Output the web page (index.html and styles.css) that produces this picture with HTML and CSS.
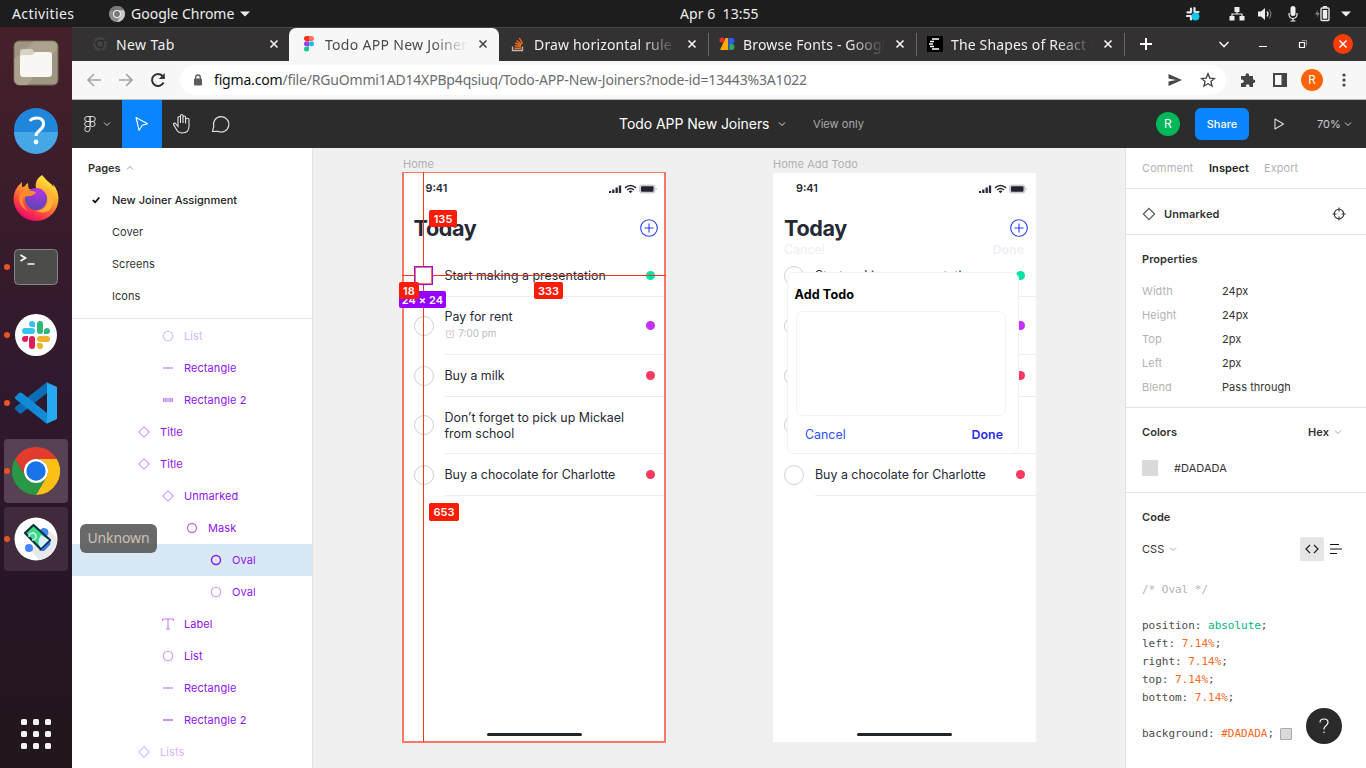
FILE: index.html
```html
<!DOCTYPE html>
<html lang="en">
<head>
<meta charset="utf-8">
<title>Todo APP New Joiners</title>
<link rel="stylesheet" href="styles.css">
</head>
<body>
<svg class="defs" aria-hidden="true">
  <symbol id="x" viewBox="0 0 10 10"><path d="M1.5 1.5l7 7M8.500 1.500l-7 7" fill="none" stroke="currentColor" stroke-width="1.700"/></symbol>
  <symbol id="chev" viewBox="0 0 8 8"><path d="M1 2.500l3 3 3-3" fill="none" stroke="currentColor"/></symbol>
  <symbol id="oval" viewBox="0 0 12 12"><circle cx="6" cy="6" r="4.700" fill="none" stroke="currentColor" stroke-width="1.100"/></symbol>
  <symbol id="ovalb" viewBox="0 0 12 12"><circle cx="6" cy="6" r="4.500" fill="none" stroke="currentColor" stroke-width="1.400"/></symbol>
  <symbol id="diamond" viewBox="0 0 12 12"><path d="M6 .7L11.300 6 6 11.300.7 6z" fill="none" stroke="currentColor" stroke-width="1.100"/></symbol>
  <symbol id="line" viewBox="0 0 12 12"><path d="M1 6h10" stroke="currentColor" stroke-width="1.600"/></symbol>
  <symbol id="bar" viewBox="0 0 12 12"><path d="M1 6h10" stroke="currentColor" stroke-width="4" opacity=".55"/><path d="M1.500 4v4M10.500 4v4M4 4v4M8 4v4" stroke="currentColor" stroke-width="1" opacity=".6"/></symbol>
  <symbol id="tee" viewBox="0 0 12 12"><path d="M.6 3V1h10.800v2M6 1v10M4 11h4" fill="none" stroke="currentColor" stroke-width="1"/></symbol>
  <symbol id="status" viewBox="0 0 48 10">
    <path d="M1 7v2M4.300 5.500V9M7.700 3.500V9M11 1.500V9" stroke="#262a35" stroke-width="2.300"/>
    <path d="M16 3.800q5.500-4.600 11 0M18 6q3.500-2.800 7 0" fill="none" stroke="#262a35" stroke-width="1.500"/><path d="M19.500 7.300q2-1.400 4 0l-2 2z" fill="#262a35"/>
    <rect x="30.500" y="1" width="15.500" height="8" rx="2.200" fill="#d5d5d7" stroke="#b9babd" stroke-width=".7"/><rect x="32" y="2.300" width="12.500" height="5.400" rx="1" fill="#20242e"/><path d="M47.300 4v2" stroke="#c4c4c7"/>
  </symbol>
  <symbol id="plus" viewBox="0 0 18 18"><circle cx="9" cy="9" r="8.300" fill="none" stroke="currentColor" stroke-width="1.100"/><path d="M9 4.500v9M4.500 9h9" stroke="currentColor" stroke-width="1.100"/></symbol>
</svg>

<header class="topbar">
  <span class="activities">Activities</span>
  <svg class="tb-chrome" viewBox="0 0 16 16"><circle cx="8" cy="8" r="8" fill="#8d8d8d"/><path d="M8 8L1 4A8 8 0 0 1 15 4z" fill="#777"/><path d="M15 4.200A8 8 0 0 1 8 16l3.500-6L10 4.200z" fill="#c9c9c9"/><circle cx="8" cy="8" r="4" fill="#eee"/><circle cx="8" cy="8" r="2.900" fill="#777"/></svg>
  <span class="appname">Google Chrome</span>
  <svg class="tri" viewBox="0 0 10 6"><path d="M0 .500h10L5 5.500z" fill="#eee"/></svg>
  <span class="clock">Apr 6&nbsp; 13:55</span>
  <div class="tray">
    <svg width="16" height="16" viewBox="0 0 16 16"><g stroke="#e8e8e8" stroke-width="2.200" stroke-linecap="round"><path d="M6 2.500V6M9.500 2v4M2.500 6.300H6M2 10h4M10 6h3.500M6 10v3.500"/></g><circle cx="10.500" cy="10.500" r="3.900" fill="#0fc8ee"/></svg>
    <svg width="16" height="16" viewBox="0 0 16 16" fill="#eee"><rect x="5.500" y="1" width="5" height="5"/><rect x=".5" y="10" width="5" height="4.500"/><rect x="10.500" y="10" width="5" height="4.500"/><path d="M3 11V8h10v3M8 5v3" stroke="#eee" stroke-width="1.200" fill="none"/></svg>
    <svg width="16" height="16" viewBox="0 0 16 16"><path d="M1 5.500h3L8 2v12L4 10.500H1z" fill="#eee"/><path d="M10 5.500q2 2.500 0 5" fill="none" stroke="#eee" stroke-width="1.300"/><path d="M12.500 3.500q3 4.500 0 9" fill="none" stroke="#888"/></svg>
    <svg width="16" height="16" viewBox="0 0 16 16"><rect x="5.500" y="0" width="5" height="10" rx="2.500" fill="#eee"/><path d="M4 7v1.500a4 4 0 0 0 8 0V7M8 12.500V15M5.500 15h5" fill="none" stroke="#eee" stroke-width="1.200"/></svg>
    <svg width="18" height="16" viewBox="0 0 18 16"><path d="M5 4L2 8.500h2.500L4 12l2.500-5H4.500z" fill="#888"/><rect x="8" y="2" width="8" height="12.500" rx="1" fill="none" stroke="#eee" stroke-width="1.300"/><rect x="9.800" y="4" width="4.400" height="8.700" fill="#eee"/><path d="M10 .8h4" stroke="#eee" stroke-width="1.500"/></svg>
    <svg class="tri" viewBox="0 0 10 6"><path d="M0 .500h10L5 5.500z" fill="#eee"/></svg>
  </div>
</header>

<div class="desktop">
<nav class="dock">
  <div class="app"><svg viewBox="0 0 48 48"><rect x="2" y="2" width="44" height="44" rx="5" fill="#9f9681" stroke="#6d6658"/><path d="M2.500 20L22 2.500h20l3 3V10L15 46H6l-3.500-4z" fill="#aca38e"/><path d="M8 13q0-3 3-3h8q2 0 3 3h14q4 0 4 4v17q0 4-4 4H12q-4 0-4-4z" fill="#d9d2c2"/><path d="M8 18q0-2 3-2h9l4-3h13q3 0 3 3v18q0 4-4 4H12q-4 0-4-4z" fill="#f8f7f5"/></svg></div>
  <div class="app"><svg viewBox="0 1 48 48"><circle cx="24" cy="24" r="22" fill="#1f86dc"/><path d="M2 26h44a22 22 0 0 1-44 0z" fill="#45a7e6"/><path d="M18 15q2-3 7-3 6.500 0 6.500 6 0 3-3.500 6-4 3-4 6" fill="none" stroke="#fff" stroke-width="3"/><circle cx="24" cy="36" r="2.400" fill="#fff"/></svg></div>
  <div class="app"><svg viewBox="0 1 48 48">
    <defs><linearGradient id="fx" x1=".8" y1=".1" x2=".3" y2="1"><stop offset="0" stop-color="#ffe43c"/><stop offset=".4" stop-color="#ff9a2b"/><stop offset=".75" stop-color="#ff3a47"/><stop offset="1" stop-color="#e60073"/></linearGradient><radialGradient id="fp" cx=".6" cy=".1" r=".9"><stop offset="0" stop-color="#b833e1"/><stop offset="1" stop-color="#5947b8"/></radialGradient></defs>
    <path d="M30 1q5 6 9 9 2 1 2 3 1-1 0-3 5 6 5.500 14A22.500 22.500 0 0 1 24 47 22.500 22.500 0 0 1 1.500 24Q2 15 10 8v5q2 0 3-1 2-3 3-3 0 4 1 6h7q-2-9 6-14z" fill="url(#fx)"/>
    <circle cx="24" cy="25" r="11" fill="url(#fp)"/><path d="M8 20q7-6 16-2-1 3-6 4-5 0-7 2-1 8 5 13Q5 32 8 20z" fill="#ff8a2a"/><path d="M28 14q7 2 8 11 0 10-12 12 14 5 17-8 1-9-6-14z" fill="#ffb238"/>
  </svg></div>
  <div class="app"><i class="run"></i><svg viewBox="0 -1 48 48"><rect x="2.500" y="5.500" width="43" height="35" rx="4" fill="#4c4d4b" stroke="#858585"/><path d="M8.500 11l5 3-5 3" fill="none" stroke="#fff" stroke-width="1.700"/><path d="M15.500 20h7" stroke="#fff" stroke-width="1.500"/></svg></div>
  <div class="app"><i class="run"></i><svg viewBox="0 0 48 48"><circle cx="24" cy="24" r="21" fill="#fff"/>
    <g fill="#36c5f0"><rect x="10" y="17" width="13" height="6" rx="3"/><path d="M23 16h-3a3 3 0 1 1 3-3z"/></g><g fill="#2eb67d"><rect x="25" y="10" width="6" height="13" rx="3"/><path d="M32 23v-3a3 3 0 1 1 3 3z"/></g><g fill="#ecb22e"><rect x="25" y="25" width="13" height="6" rx="3"/><path d="M25 32h3a3 3 0 1 1-3 3z"/></g><g fill="#e01e5a"><rect x="17" y="25" width="6" height="13" rx="3"/><path d="M16 25v3a3 3 0 1 1-3-3z"/></g></svg></div>
  <div class="app"><i class="run"></i><svg viewBox="0 0 48 48"><path d="M3 30l4 4q1 1 3 0l25-20V3L3.500 28q-1 1-.5 2z" fill="#0d6db4"/><path d="M3 18l4-4q1-1 3 0l25 20v11L3.500 20q-1-1-.5-2z" fill="#128bd7"/><path d="M34 3l11 5v32l-11 5q1 0 1-2V5q0-2-1-2z" fill="#27a9f2"/></svg></div>
  <div class="app open"><i class="run"></i><svg viewBox="0 0 48 48"><path d="M3.200 12a24 24 0 0 1 41.600 0H24a12 12 0 0 0-10.400 18z" fill="#e33b2e"/><path d="M44.800 12A24 24 0 0 1 24 48l10.400-18A12 12 0 0 0 24 12z" fill="#fcc014"/><path d="M24 48A24 24 0 0 1 3.200 12l10.400 18A12 12 0 0 0 34.400 30z" fill="#289847"/><circle cx="24" cy="24" r="12" fill="#fff"/><circle cx="24" cy="24" r="9.700" fill="#1a73e8"/></svg></div>
  <div class="app dim"><i class="run"></i><svg viewBox="0 0 48 48"><circle cx="24" cy="24" r="21.500" fill="#fff"/><path d="M18 35l20-19 7 7a21.500 21.500 0 0 1-18 22z" fill="#e9e9e9"/><circle cx="32" cy="17.500" r="4.500" fill="#4285f4"/><circle cx="17" cy="33" r="4" fill="#4285f4"/><path d="M27 36l12-12-1 6-6 6z" fill="#3778e8"/><path d="M21.500 10L38 25 28.500 34 13 18z" fill="#3ddc84" stroke="#073042" stroke-width="2.200" stroke-linejoin="round"/><path d="M29 20l8 5-8 8q-5-5 0-13z" fill="#d7effe"/><path d="M17 22a3.500 3.500 0 1 1 3 3" fill="none" stroke="#d7effe" stroke-width="1.500"/></svg></div>
  <div class="grid9"><i></i><i></i><i></i><i></i><i></i><i></i><i></i><i></i><i></i></div>
  <div class="tooltip">Unknown</div>
</nav>

<div class="browser">
  <div class="tabs">
    <div class="tab first"><svg class="fav" viewBox="0 0 16 16"><circle cx="8" cy="8" r="7" fill="#414347"/><circle cx="8" cy="8" r="3.600" fill="none" stroke="#2b292a" stroke-width="1.200"/><path d="M8 4.400h6.500M4.900 9.800L1.800 4.200M11.100 9.800L8 15" stroke="#2b292a"/></svg><span class="name">New Tab</span><svg class="x"><use href="#x"/></svg></div>
    <div class="tab active"><svg class="fav" viewBox="0 0 16 16"><path d="M5.500 0H8v5H5.500a2.500 2.500 0 0 1 0-5z" fill="#f9300c"/><path d="M8 0h2.500a2.500 2.500 0 0 1 0 5H8z" fill="#ff7262"/><path d="M5.500 5.300H8v5H5.500a2.500 2.500 0 0 1 0-5z" fill="#a23bff"/><circle cx="10.500" cy="7.800" r="2.500" fill="#1abcfe"/><path d="M5.500 10.600H8v2.500a2.500 2.500 0 1 1-2.500-2.500z" fill="#0acf83"/></svg><span class="name fade">Todo APP New Joiners</span><svg class="x"><use href="#x"/></svg></div>
    <div class="tab"><svg class="fav" viewBox="0 0 16 16"><path d="M2.500 10.500v4h10v-4" fill="none" stroke="#bcbbbb" stroke-width="1.300"/><path d="M4.500 12.300h6.500M4.600 9.600l6.400.9M5.200 7l6 2.200M6.700 4.500l5 4M9.300 2l3.300 5.500" stroke="#f46f14" stroke-width="1.400"/></svg><span class="name fade">Draw horizontal rule in</span><svg class="x"><use href="#x"/></svg></div>
    <div class="tab sep"><svg class="fav" viewBox="0 0 16 16"><path d="M9 2h3.500a3 3 0 0 1 0 6H9z" fill="#2a5ee8"/><path d="M9 8h3.500a3 3 0 0 1 0 6H9z" fill="#34a853"/><path d="M8 2h2.500v12H8z" fill="#2d4fd0"/><path d="M6.500 2H9v12H1z" fill="#fbaa04"/><circle cx="3" cy="4" r="2.600" fill="#ea2f25"/></svg><span class="name fade">Browse Fonts - Google</span><svg class="x"><use href="#x"/></svg></div>
    <div class="tab sep"><svg class="fav" viewBox="0 0 16 16"><rect width="16" height="16" fill="#000"/><path d="M5 3h7M3 5.500h4M2 8h4M3 10.500h4M5 13h7" stroke="#fff" stroke-width="1.400"/></svg><span class="name fade">The Shapes of React Na</span><svg class="x"><use href="#x"/></svg></div>
    <div class="winctl">
      <svg width="14" height="14" viewBox="0 0 14 14"><path d="M7 1v12M1 7h12" stroke="#fff" stroke-width="2"/></svg>
      <svg width="12" height="12" viewBox="0 0 12 12"><path d="M1.500 4L6 8.500 10.500 4" fill="none" stroke="#eee" stroke-width="1.600"/></svg>
      <svg width="10" height="10" viewBox="0 0 10 10"><path d="M1 7.500h8" stroke="#fff"/></svg>
      <svg width="10" height="10" viewBox="0 0 10 10"><path d="M1.500 3.500h5v5h-5z" fill="none" stroke="#fff" stroke-width="1.200"/><path d="M3.500 1.500h5v5" fill="none" stroke="#aaa" stroke-width=".8"/></svg>
      <svg width="20" height="20" viewBox="0 0 20 20"><circle cx="10" cy="10" r="10" fill="#f83c04"/><path d="M6.500 6.500l7 7M13.500 6.500l-7 7" stroke="#fff" stroke-width="1.500"/></svg>
    </div>
  </div>

  <div class="toolbar">
    <svg width="16" height="16" viewBox="0 0 16 16"><path d="M15 8H2.500M8 2L2 8l6 6" fill="none" stroke="#a5a5a5" stroke-width="1.700"/></svg>
    <svg width="16" height="16" viewBox="0 0 16 16"><path d="M1 8h12.500M8 2l6 6-6 6" fill="none" stroke="#a5a5a5" stroke-width="1.700"/></svg>
    <svg width="16" height="16" viewBox="0 0 16 16"><path d="M13.500 10.500A6 6 0 1 1 12.500 4" fill="none" stroke="#333" stroke-width="2"/><path d="M14.800 1v6H8.800z" fill="#333"/></svg>
    <div class="omnibox">
      <svg width="10" height="12" viewBox="0 0 10 12"><rect x="1" y="4.500" width="8" height="7" rx="1" fill="#5a5c63"/><path d="M2.700 5V3.300a2.300 2.300 0 0 1 4.600 0V5" fill="none" stroke="#5a5c63" stroke-width="1.300"/></svg>
      <span class="url"><b>figma.com</b>/file/RGuOmmi1AD14XPBp4qsiuq/Todo-APP-New-Joiners?node-id=13443%3A1022</span>
      <svg class="send" width="16" height="16" viewBox="0 0 16 16"><path d="M1.500 2L15 8 1.500 14V9.500L9 8 1.500 6.500z" fill="#484848"/></svg>
      <svg width="16" height="16" viewBox="0 0 16 16"><path d="M8 1.800l1.800 4.300 4.700.4-3.500 3.100 1 4.500L8 11.700l-4 2.400 1-4.500L1.500 6.500l4.700-.4z" fill="none" stroke="#484848" stroke-width="1.400"/></svg>
    </div>
    <svg width="16" height="16" viewBox="0 0 16 16"><path d="M1 4h4.500V3a1.800 1.800 0 0 1 3.600 0v1H13v3.500h.500a1.800 1.800 0 0 1 0 3.600H13V15H9.500v-1a1.800 1.800 0 0 0-3.600 0v1H1v-4h1a1.800 1.800 0 0 0 0-3.600H1z" fill="#444"/></svg>
    <svg width="16" height="16" viewBox="0 0 16 16"><rect x="2" y="2" width="12" height="12" fill="none" stroke="#444" stroke-width="2"/><path d="M9.500 2H15v12H9.500z" fill="#444"/></svg>
    <span class="profile">R</span>
    <svg width="16" height="16" viewBox="0 0 16 16" fill="#444"><circle cx="8" cy="3" r="1.600"/><circle cx="8" cy="8" r="1.600"/><circle cx="8" cy="13" r="1.600"/></svg>
  </div>

  <div class="figbar">
    <div class="tools">
      <div class="tool menu"><svg width="14" height="18" viewBox="0 0 14 18"><path d="M4.200 1.500H7v5H4.200a2.500 2.500 0 0 1 0-5zM7 1.500h2.800a2.500 2.500 0 0 1 0 5H7zM4.200 6.500H7v5H4.200a2.500 2.500 0 0 1 0-5zM4.200 11.500H7V14a2.600 2.600 0 1 1-2.800-2.500z" fill="none" stroke="#ddd"/><circle cx="9.600" cy="9" r="2.500" fill="none" stroke="#ddd"/></svg><svg width="8" height="8"><use href="#chev"/></svg></div>
      <div class="tool on"><svg width="18" height="18" viewBox="0 0 18 18"><path d="M3 2.500l11.500 6.200-5.200 1.600-3.200 5z" fill="none" stroke="#fff" stroke-width="1.100" stroke-linejoin="round"/></svg></div>
      <div class="tool"><svg width="22" height="22" viewBox="0 0 22 22"><path d="M7 12V4.800c0-1.800 2.500-1.800 2.500 0V10M9.500 5V2.800c0-1.700 2.500-1.700 2.500 0V10M12 4.300c0-1.700 2.600-1.700 2.600 0V10.500M14.600 6.500c0-1.600 3.400-1.600 3.400 0V13c0 4.500-2.500 7-6.800 7-3.200 0-4.700-1.500-5.700-3.500l-2.800-4.600C1.700 10.400 3.700 9.300 5 11l2 2.500V11" fill="none" stroke="#e4e4e4" stroke-width="1.100"/></svg></div>
      <div class="tool"><svg width="20" height="20" viewBox="0 0 20 20"><path d="M1.500 17.500l1.300-5A7.700 7.700 0 1 1 6.800 17.200z" fill="none" stroke="#e4e4e4" stroke-width="1.100" stroke-linejoin="round"/></svg></div>
    </div>
    <div class="doc"><span class="doctitle">Todo APP New Joiners</span><svg width="8" height="8"><use href="#chev"/></svg><span class="viewonly">View only</span></div>
    <div class="acts"><span class="me">R</span><span class="share">Share</span><svg class="play" width="12" height="14" viewBox="0 0 12 14"><path d="M2 2l8.500 5L2 12z" fill="none" stroke="#ddd" stroke-width="1.100" stroke-linejoin="round"/></svg><span class="pct">70%</span><svg width="8" height="8"><use href="#chev"/></svg></div>
  </div>

  <div class="work">
    <aside class="left">
      <div class="pages">
        <div class="phead">Pages <svg class="flip" width="8" height="8"><use href="#chev"/></svg></div>
        <div class="page cur"><svg width="8" height="8" viewBox="0 0 8 8"><path d="M.8 4l2.400 2.300L7.300 1.500" fill="none" stroke="#000" stroke-width="1.700"/></svg>New Joiner Assignment</div>
        <div class="page">Cover</div>
        <div class="page">Screens</div>
        <div class="page">Icons</div>
      </div>
      <div class="layers">
        <div class="layer l2 hid"><svg><use href="#oval"/></svg>List</div>
        <div class="layer l2"><svg><use href="#line"/></svg>Rectangle</div>
        <div class="layer l2 full"><svg><use href="#bar"/></svg>Rectangle 2</div>
        <div class="layer l1"><svg><use href="#diamond"/></svg>Title</div>
        <div class="layer l1"><svg><use href="#diamond"/></svg>Title</div>
        <div class="layer l2"><svg><use href="#diamond"/></svg>Unmarked</div>
        <div class="layer l3 mid"><svg><use href="#ovalb"/></svg>Mask</div>
        <div class="layer l4 sel"><svg><use href="#ovalb"/></svg>Oval</div>
        <div class="layer l4"><svg><use href="#oval"/></svg>Oval</div>
        <div class="layer l2 mid"><svg><use href="#tee"/></svg>Label</div>
        <div class="layer l2"><svg><use href="#oval"/></svg>List</div>
        <div class="layer l2"><svg><use href="#line"/></svg>Rectangle</div>
        <div class="layer l2 mid"><svg><use href="#line"/></svg>Rectangle 2</div>
        <div class="layer l1 hid"><svg><use href="#diamond"/></svg>Lists</div>
      </div>
    </aside>

    <main class="canvas">
      <div class="flabel home">Home</div>
      <section class="frame home">
        <div class="status"><span>9:41</span><svg><use href="#status"/></svg></div>
        <div class="title"><span>Today</span><svg><use href="#plus"/></svg></div>
        <div class="todo"><i class="ring"></i><div class="body"><span>Start making a presentation</span><i class="dot green"></i></div></div>
        <div class="todo t2"><i class="ring"></i><div class="body"><div><span>Pay for rent</span><div class="time"><svg width="10" height="10" viewBox="0 0 10 10"><circle cx="5" cy="5.300" r="3.700" fill="none" stroke="#c3c3c6" stroke-width=".9"/><path d="M5 3v2.500h1.700M.6 2.300L2.300.8M9.400 2.300L7.700.8M2.500 8.500l-1 1M7.500 8.500l1 1" fill="none" stroke="#c3c3c6" stroke-width=".9"/></svg>7:00 pm</div></div><i class="dot purple"></i></div></div>
        <div class="todo"><i class="ring"></i><div class="body"><span>Buy a milk</span><i class="dot red"></i></div></div>
        <div class="todo t4"><i class="ring"></i><div class="body"><span>Don’t forget to pick up Mickael<br>from school</span></div></div>
        <div class="todo"><i class="ring"></i><div class="body"><span>Buy a chocolate for Charlotte</span><i class="dot red"></i></div></div>
        <i class="homebar"></i>
      </section>
      <i class="outline"></i>
      <i class="selbox"></i>
      <i class="guide-h a"></i><i class="guide-h b"></i><i class="guide-v a"></i><i class="guide-v b"></i>
      <span class="size">24 × 24</span>
      <span class="tag g135">135</span><span class="tag g18">18</span><span class="tag g333">333</span><span class="tag g653">653</span>

      <div class="flabel add">Home Add Todo</div>
      <section class="frame add">
        <div class="status"><span>9:41</span><svg><use href="#status"/></svg></div>
        <div class="title"><span>Today</span><svg><use href="#plus"/></svg></div>
        <div class="todo"><i class="ring"></i><div class="body"><span>Start making a presentation</span><i class="dot green"></i></div></div>
        <div class="todo t2"><i class="ring"></i><div class="body"><i class="dot purple"></i></div></div>
        <div class="todo"><i class="ring"></i><div class="body"><i class="dot red"></i></div></div>
        <div class="todo t4"><i class="ring"></i><div class="body"></div></div>
        <div class="todo"><i class="ring"></i><div class="body"><span>Buy a chocolate for Charlotte</span><i class="dot red"></i></div></div>
        <i class="homebar"></i>
        <div class="ghost"><span>Cancel</span><b>Done</b></div>
        <div class="dialog"><div class="dtitle">Add Todo</div><div class="field"></div><div class="dbtns"><span>Cancel</span><b>Done</b></div></div>
      </section>
    </main>

    <aside class="right">
      <div class="rtabs"><span class="w1">Comment</span><b>Inspect</b><span class="w2">Export</span></div>
      <div class="rname"><svg width="14" height="14" viewBox="0 0 12 12"><path d="M6 1.200L10.800 6 6 10.800 1.200 6z" fill="none" stroke="#555"/></svg><b>Unmarked</b><svg class="target" width="14" height="14" viewBox="0 0 14 14"><circle cx="7" cy="7" r="4.800" fill="none" stroke="#333" stroke-width="1.100"/><path d="M7 .5v4M7 9.500v4M.5 7h4M9.500 7h4" stroke="#333" stroke-width="1.100"/></svg></div>
      <div class="props">
        <h3>Properties</h3>
        <dl><dt>Width</dt><dd>24px</dd><dt>Height</dt><dd>24px</dd><dt>Top</dt><dd>2px</dd><dt>Left</dt><dd>2px</dd><dt>Blend</dt><dd>Pass through</dd></dl>
      </div>
      <div class="colors">
        <div class="chead"><b>Colors</b><b class="hex">Hex</b><svg width="8" height="8"><use href="#chev"/></svg></div>
        <div class="crow"><i></i>#DADADA</div>
      </div>
      <div class="code">
        <h3>Code</h3>
        <div class="lang">CSS<svg width="8" height="8"><use href="#chev"/></svg><span class="tile"><svg width="14" height="10" viewBox="0 0 14 10"><path d="M5 1L1 5l4 4M9 1l4 4-4 4" fill="none" stroke="#222" stroke-width="1.200"/></svg></span><svg class="lines" width="12" height="10" viewBox="0 0 12 10"><path d="M0 .5h9M0 5h12M0 9.500h7" stroke="#111"/></svg></div>
        <div class="src">
          <div class="note">/* Oval */</div>
          <div class="gap"><span>position: </span><u>absolute</u><span>;</span></div>
          <div><span>left: </span><em>7.14%</em><span>;</span></div>
          <div><span>right: </span><em>7.14%</em><span>;</span></div>
          <div><span>top: </span><em>7.14%</em><span>;</span></div>
          <div><span>bottom: </span><em>7.14%</em><span>;</span></div>
          <div class="gap"><span>background: </span><em>#DADADA</em><span>;</span><s></s></div>
        </div>
      </div>
      <span class="help"><svg width="12" height="16" viewBox="0 0 12 16"><path d="M2 4.500Q2 1 6 1t4 3.300q0 2-2 3.400-2 1.300-2 3.300v.5" fill="none" stroke="#fff" stroke-width="1.200"/><circle cx="6" cy="14.300" r=".8" fill="#fff"/></svg></span>
    </aside>
  </div>
</div>
</div>
</body>
</html>
```
FILE: styles.css
```css
* { box-sizing: border-box; }
body { margin: 0; width: 1366px; height: 768px; overflow: hidden; display: flex; flex-direction: column; font: 11px/16px Inter, sans-serif; color: #333; letter-spacing: .05px; }
svg { display: block; flex: none; }
i { font-style: normal; }
.defs { position: absolute; width: 0; height: 0; }

.topbar { position: relative; flex: none; height: 27px; background: #1d1d1d; display: flex; align-items: center; padding: 0 14px 0 12px; font: 14px/26px "Noto Sans", sans-serif; letter-spacing: -.12px; color: #eee; }
.activities { width: 97px; letter-spacing: .4px; }
.tb-chrome { width: 16px; height: 16px; }
.appname { margin-left: 6px; width: 104px; white-space: nowrap; letter-spacing: 0; }
.tri { width: 10px; height: 6px; margin-left: 5px; }
.clock { margin-left: 430px; white-space: nowrap; letter-spacing: .05px; }
.tray { margin-left: auto; display: flex; align-items: center; gap: 12px; }
.tray svg:first-child { margin-right: 16px; }
.tray .tri { margin-left: -2px; margin-right: 1px; }

.desktop { flex: 1; display: flex; min-height: 0; }
.dock { position: relative; width: 72px; flex: none; padding: 4px; display: flex; flex-direction: column; gap: 4px; background: linear-gradient(#45212a, #3b1c2b 22%, #30192e 48%, #271525 75%, #22161c); }
.app { position: relative; height: 64px; flex: none; display: flex; align-items: center; justify-content: center; border-radius: 4px; }
.app svg { width: 48px; height: 48px; }
.app.open { background: #564252; }
.app.dim { background: #3f2b3c; }
.run { position: absolute; left: 0; top: 29px; width: 6px; height: 6px; border-radius: 50%; background: #e95420; }
.grid9 { margin: auto auto 15px; display: grid; grid-template-columns: repeat(3, 6px); gap: 6px; }
.grid9 i { height: 6px; border-radius: 1.500px; background: #f2f2f2; }
.tooltip { position: absolute; z-index: 5; left: 80px; top: 497px; width: 77px; height: 29px; border-radius: 6px; background: rgba(80, 80, 80, .86); color: #cdc0b2; font: 14px/28px "Noto Sans", sans-serif; text-align: center; letter-spacing: -.1px; }

.browser { flex: 1; display: flex; flex-direction: column; min-width: 0; }
.tabs { height: 34px; flex: none; display: flex; background: #333132; border-top: 1px solid #474546; font: 14px/31px "Noto Sans", sans-serif; letter-spacing: .16px; color: #f0f0f0; }
.tab { position: relative; width: 208px; display: flex; align-items: center; gap: 8px; padding: 0 11px 1px; }
.tab.first { width: 217px; padding: 0 10px 1px 20px; letter-spacing: .4px; }
.tab.active { width: 210px; padding-left: 12px; background: #f7f7f7; color: #4a4a4a; border-radius: 7px 7px 0 0; letter-spacing: .3px; }
.tab.active + .tab { width: 209px; }
.tab.sep { border-left: 1px solid transparent; border-image: linear-gradient(transparent 18%, #666 18%, #666 82%, transparent 82%) 1; padding-left: 10px; }
.fav { width: 16px; height: 16px; }
.name { flex: 1; white-space: nowrap; overflow: hidden; }
.fade { -webkit-mask-image: linear-gradient(90deg, #000 75%, transparent); mask-image: linear-gradient(90deg, #000 75%, transparent); }
.tab .name { margin-right: 2px; }
.x { width: 10px; height: 10px; }
.winctl { flex: 1; display: flex; align-items: center; border-left: 1px solid transparent; border-image: linear-gradient(transparent 18%, #666 18%, #666 82%, transparent 82%) 1; padding: 0 13px 1px 14px; }
.winctl svg:nth-child(2) { margin-left: 65px; }
.winctl svg:nth-child(3) { margin-left: 28px; }
.winctl svg:nth-child(4) { margin-left: 30px; }
.winctl svg:nth-child(5) { margin-left: auto; }

.toolbar { height: 39px; flex: none; display: flex; align-items: center; gap: 16px; padding: 0 14px; background: #f7f7f7; border-bottom: 1px solid #b8bcbc; }
.omnibox { flex: 1; margin: 0 -2px 0 -2px; height: 30px; border-radius: 15px; background: #fff; display: flex; align-items: center; padding: 0 10px 0 13px; }
.url { margin-left: 11px; font: 14px/30px "Noto Sans", sans-serif; letter-spacing: -.175px; color: #6c6c70; white-space: nowrap; }
.url b { font-weight: 400; color: #111; }
.send { margin: 0 17px 0 auto; }
.profile { width: 22px; height: 22px; margin: 0 -3px; border-radius: 50%; background: #ff6200; color: #fff; font: 12px/22px Roboto, sans-serif; text-align: center; }

.figbar { height: 48px; flex: none; display: flex; align-items: center; background: #2c2c2c; color: #fff; }
.tools { width: 547px; display: flex; }
.tool { width: 40px; height: 48px; display: flex; align-items: center; justify-content: center; }
.tool:last-child { padding-right: 2px; }
.tool.menu { width: 50px; padding-right: 1px; gap: 6px; color: #ccc; }
.tool.on { background: #0a84ff; }
.doc { display: flex; align-items: center; color: #ddd; white-space: nowrap; }
.doctitle { width: 151px; margin-right: 8px; color: #fff; font-size: 14px; letter-spacing: -.05px; }
.viewonly { margin-left: 27px; color: #aaa; }
.acts { margin-left: auto; display: flex; align-items: center; padding-right: 14px; color: #ccc; }
.me { width: 24px; height: 24px; border-radius: 50%; background: #00b85c; color: #fff; font-size: 12px; line-height: 24px; text-align: center; }
.share { margin-left: 15px; width: 54px; height: 32px; border-radius: 6px; background: #0a84ff; color: #fff; font-weight: 500; line-height: 32px; text-align: center; }
.play { margin-left: 24px; }
.pct { margin: 0 5px 0 32px; width: 22px; }

.work { flex: 1; display: flex; min-height: 0; }
.left { width: 241px; flex: none; display: flex; flex-direction: column; background: #fff; border-right: 1px solid #e2e2e2; }
.pages { height: 171px; padding-top: 4px; border-bottom: 1px solid #e2e2e2; flex: none; }
.phead { height: 32px; padding-left: 16px; display: flex; align-items: center; gap: 5px; font-weight: 600; letter-spacing: -.05px; }
.phead svg { color: #999; }
.flip { transform: rotate(180deg); }
.page { height: 32px; display: flex; align-items: center; padding-left: 40px; }
.page.cur { padding-left: 20px; gap: 12px; font-weight: 500; color: #222; letter-spacing: 0; }
.layers { flex: 1; overflow: hidden; padding-top: 1px; }
.layer { height: 32px; display: flex; align-items: center; gap: 10px; color: #9014f5; letter-spacing: .08px; }
.layer svg { width: 12px; height: 12px; opacity: .42; }
.layer.mid svg { opacity: .58; }
.layer.full svg { opacity: .6; }
.layer.hid { color: #dcb7fb; }
.layer.hid svg { opacity: 1; }
.l1 { padding-left: 66px; }
.l2 { padding-left: 90px; }
.l3 { padding-left: 114px; }
.l4 { padding-left: 138px; }
.layer.sel { background: #d8e8f6; }
.layer.sel svg { opacity: 1; }

.canvas { position: relative; flex: 1; background: #f0f0f0; overflow: hidden; }
.flabel { position: absolute; top: 8px; color: #b0b0b0; }
.flabel.home { left: 90px; }
.flabel.add { left: 460px; }
.frame { position: absolute; top: 25px; width: 263px; height: 569px; background: #fff; font-size: 12.420px; line-height: 16px; color: #262a35; letter-spacing: 0; }
.frame.home { left: 89.500px; }
.frame.add { left: 460px; }
.status { height: 31px; display: flex; align-items: center; justify-content: space-between; padding: 0 9px 0 23px; font-size: 10.800px; font-weight: 600; }
.status svg { width: 48px; height: 10px; }
.title { height: 51px; padding: 0 8px 3px 11px; display: flex; align-items: center; justify-content: space-between; font-size: 21.600px; font-weight: 700; letter-spacing: -.35px; }
.title svg { width: 18px; height: 18px; color: #2b3fee; }
.todo { height: 42px; display: flex; align-items: center; padding-left: 11px; gap: 11px; }
.t2 { height: 58px; }
.t4 { height: 57px; }
.ring { width: 20px; height: 20px; flex: none; margin-bottom: 1px; border: 1.500px solid #d0d0d0; border-radius: 50%; }
.body { flex: 1; height: 100%; display: flex; align-items: center; border-bottom: 1px solid #ededee; padding-right: 11px; white-space: nowrap; }
.t2 .body > div { padding-top: 1px; }
.t4 .body { padding-top: 1px; }
.dot { width: 9px; height: 9px; margin-left: auto; border-radius: 50%; }
.green { background: #00e2a4; }
.purple { background: #c630ff; }
.red { background: #ff3860; }
.time { display: flex; align-items: center; gap: 4px; font-size: 9.800px; color: #bbbbbe; line-height: 18px; }
.homebar { position: absolute; left: 84px; bottom: 6px; width: 95px; height: 3px; border-radius: 2px; background: #20242c; }
.outline { position: absolute; left: 89px; top: 24px; width: 264px; height: 571px; border: 2px solid #fd7866; border-top-width: 1.500px; }
.selbox { position: absolute; left: 101px; top: 118px; width: 19px; height: 19px; border: 1.500px solid #9b0cff; box-shadow: inset 0 0 0 1px #f9705c; background: #fff; }
.guide-h { position: absolute; top: 127px; height: 1px; background: #f03622; }
.guide-h.a { left: 89px; width: 13px; }
.guide-h.b { left: 119px; width: 234px; }
.guide-v { position: absolute; left: 110px; width: 1px; background: #f03622; }
.guide-v.a { top: 24px; height: 94px; }
.guide-v.b { top: 137px; height: 457px; }
.tag, .size { position: absolute; height: 17px; border-radius: 2px; background: #ff1c03; color: #fff; font-weight: 600; line-height: 18px; text-align: center; white-space: nowrap; }
.size { left: 86px; top: 143px; width: 47px; background: #9600ff; }
.g135 { left: 116px; top: 62px; width: 28px; }
.g18 { left: 86px; top: 134px; width: 20px; }
.g333 { left: 221px; top: 134px; width: 29px; }
.g653 { left: 116px; top: 355px; width: 30px; height: 18px; }
.ghost { position: absolute; left: 11px; right: 12px; top: 69px; display: flex; justify-content: space-between; color: #eeeef6; }
.ghost b, .dbtns b { font-weight: 600; }
.dialog { position: absolute; left: 14px; top: 99px; width: 232px; height: 182px; border: 1px solid #eff0f8; border-radius: 7px; background: #fff; padding: 14px 12px 0 8px; }
.dtitle { margin-left: -1.500px; color: #000; font-weight: 700; font-size: 12.600px; letter-spacing: .1px; }
.field { margin-top: 8px; height: 105px; border: 1px solid #f2f2f9; border-radius: 7px; }
.dbtns { margin: 11px 3px 0 9px; display: flex; justify-content: space-between; color: #2c50fb; }
.dbtns b { color: #2b2ced; }

.right { position: relative; width: 241px; flex: none; background: #fff; border-left: 1px solid #e2e2e2; }
.right b, .right h3 { font-weight: 600; color: #333; }
.right h3 { margin: 0; font-size: 11px; }
.rtabs { height: 41px; border-bottom: 1px solid #e2e2e2; padding-left: 16px; display: flex; align-items: center; color: #b3b3b3; }
.rtabs .w1 { width: 67px; letter-spacing: .12px; }
.rtabs b { width: 55px; color: #222; }
.rname { height: 46px; border-bottom: 1px solid #e2e2e2; padding: 5px 20px 0 16px; display: flex; align-items: center; gap: 8px; }
.target { margin-left: auto; }
.props { height: 173px; border-bottom: 1px solid #e2e2e2; padding: 16px; }
dl { margin: 12px 0 0; display: grid; grid-template-columns: 80px 1fr; line-height: 24px; }
dt { color: #b3b3b3; }
dd { margin: 0; }
.colors { height: 85px; border-bottom: 1px solid #e2e2e2; padding: 16px; }
.chead { display: flex; align-items: center; padding-right: 8px; color: #aaa; }
.hex { margin: 0 5px 0 auto; }
.crow { display: flex; gap: 16px; margin-top: 20px; }
.crow i { width: 16px; height: 16px; background: #dadada; }
.code { padding: 16px; }
.lang { display: flex; align-items: center; height: 24px; margin-top: 12px; padding-right: 8px; }
.lang > svg:first-of-type { margin-left: 5px; color: #aaa; }
.tile { margin-left: auto; width: 24px; height: 24px; border-radius: 2px; background: #e5e5e5; display: flex; align-items: center; justify-content: center; }
.lines { margin-left: 6px; }
.src { margin-top: 20px; font: 11px/18px "DejaVu Sans Mono", monospace; letter-spacing: -.02px; color: #4c4c4c; }
.src div { display: flex; align-items: center; height: 18px; white-space: pre; }
.src .gap { margin-top: 18px; }
.src .note { color: #b3b3b3; }
.src u { text-decoration: none; color: #00b584; }
.src em { font-style: normal; color: #fb6a1d; }
.src s { width: 12px; height: 12px; margin-left: 6px; border: 1px solid #aaa; border-radius: 1px; background: #dadada; }
.help { position: absolute; left: 180px; top: 560px; width: 36px; height: 36px; border-radius: 50%; background: #2a2a2a; display: flex; align-items: center; justify-content: center; }
```
